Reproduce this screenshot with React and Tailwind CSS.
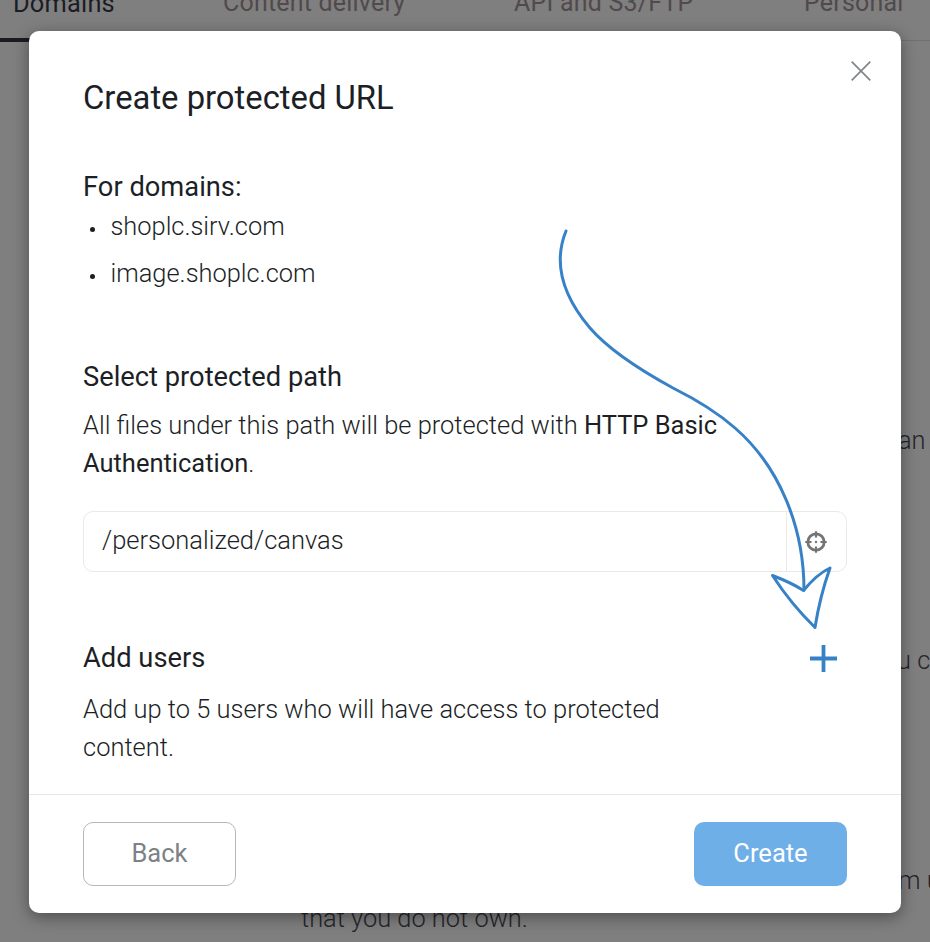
import React from "react";

const DOMAINS = ["shoplc.sirv.com", "image.shoplc.com"];

const Backdrop = () => (
  <div className="flex h-[942px] w-[930px] flex-col overflow-hidden whitespace-nowrap bg-[#7f7f7f] text-[25.4px] font-light leading-[30px] text-[#26242a]">
    <nav className="flex h-[41px] shrink-0 border-b border-[#717171] text-[25px] font-normal tracking-[0.2px] text-[#51494c]">
      <span className="-mt-[12px] h-[54px] w-[223px] pl-[13px] text-[25.4px] text-[#1c1c25] shadow-[inset_0_-4px_0_#1b1b24]">
        Domains
      </span>
      <span className="-mt-[12px] w-[291px]">Content delivery</span>
      <span className="-mt-[12px] w-[290px]">API and S3/FTP</span>
      <span className="-mt-[12px]">Personal</span>
    </nav>
    <div className="flex flex-col pl-[898px] pt-[384px]">
      <p>an</p>
      <p className="-ml-px pt-[190px]">u c</p>
      <p className="pt-[190px]">m u</p>
    </div>
    <p className="pl-[301px] pt-[8px]">that you do not own.</p>
  </div>
);

const CloseIcon = () => (
  <svg width="20" height="20" viewBox="0 0 20 20" stroke="#80868a" strokeWidth="1.7">
    <path d="M.7.7l18.6 18.6M19.3.7L.7 19.3" />
  </svg>
);

const TargetIcon = () => (
  <svg width="22" height="22" viewBox="0 0 22 22" fill="none" stroke="#747474" strokeWidth="2.8">
    <circle cx="11" cy="11" r="8.2" />
    <path d="M11 .3v6.2M11 15.5v6.2M.3 11h6.2M15.500 11h6.2" strokeWidth="2.2" />
    <circle cx="11" cy="11" r="1.2" fill="#747474" stroke="none" />
  </svg>
);

const PlusIcon = () => (
  <svg width="27" height="27" viewBox="0 0 27 27" stroke="#3782c7" strokeWidth="3.8">
    <path d="M13.500 0v27M0 13.500h27" />
  </svg>
);

const Arrow = () => (
  <svg
    className="pointer-events-none absolute inset-0"
    width="930"
    height="942"
    viewBox="0 0 930 942"
    fill="none"
    stroke="#3782c7"
    strokeWidth="3"
    strokeLinecap="round"
    strokeLinejoin="round"
  >
    <path d="M566 231C553 263 563 296 590 328C609 350 640 370 673 388C695 399 718 413 735 428C780 467 804 528 804 590" />
    <path d="M772.500 575.500Q792 583 803.500 590.500Q817 574 830 568Q820 596 815 627.500Q791 604 772.500 575.500Z" />
  </svg>
);

const Modal = () => (
  <div className="flex h-[882px] w-[872px] flex-col rounded-[10px] bg-white shadow-[0_4px_16px_rgba(0,0,0,0.4)]">
    <div className="flex-1 px-[54px] pt-[30px]">
      <div className="-mr-[24px] flex items-start justify-between">
        <h1 className="pt-[17px] text-[32.8px] leading-[40px]">Create protected URL</h1>
        <CloseIcon />
      </div>
      <h2 className="mt-[53px] text-[27.3px] leading-[32px]">For domains:</h2>
      <ul className="text-[25.4px] font-light leading-[47px]">
        {DOMAINS.map((domain) => (
          <li key={domain} className="flex items-center gap-[15.5px] pl-[7px]">
            <span className="mt-[5px] size-[5px] rounded-full bg-[#1c1f26]" />
            {domain}
          </li>
        ))}
      </ul>
      <h2 className="mt-[64px] text-[27.3px] leading-[32px]">Select protected path</h2>
      <p className="mt-[13px] text-[25.48px] font-light leading-[38px]">
        All files under this path will be protected with{" "}
        <b className="font-normal">HTTP Basic Authentication</b>.
      </p>
      <div className="mt-[29px] flex h-[61px] rounded-[10px] border border-[#e8eaea]">
        <div className="flex flex-1 items-center pb-[2px] pl-[18px] text-[25.5px] font-light">
          /personalized/canvas
        </div>
        <div className="flex w-[60px] items-center justify-center border-l border-[#e8eaea] pr-[1px]">
          <TargetIcon />
        </div>
      </div>
      <div className="mt-[70px] flex items-center justify-between pr-[10px]">
        <h2 className="text-[27.3px] leading-[32px]">Add users</h2>
        <PlusIcon />
      </div>
      <p className="mt-[16px] w-[620px] text-[25.48px] font-light leading-[38px]">
        Add up to 5 users who will have access to protected content.
      </p>
    </div>
    <div className="flex h-[119px] items-start justify-between border-t border-[#e6e8e8] px-[54px] pt-[27px] text-[25.5px]">
      <button className="h-[64px] w-[153px] rounded-[10px] border border-[#b4b8ba] pb-[2px] text-[#7c8286]">Back</button>
      <button className="h-[64px] w-[153px] rounded-[10px] bg-[#6fafe7] pb-[2px] text-white">Create</button>
    </div>
  </div>
);

const App = () => (
  <div className="relative h-[942px] w-[930px] overflow-hidden font-[Roboto,sans-serif] text-[#1c1f26]">
    <Backdrop />
    <div className="absolute inset-0 flex pl-[29px] pt-[31px]">
      <Modal />
    </div>
    <Arrow />
  </div>
);

export default App;
